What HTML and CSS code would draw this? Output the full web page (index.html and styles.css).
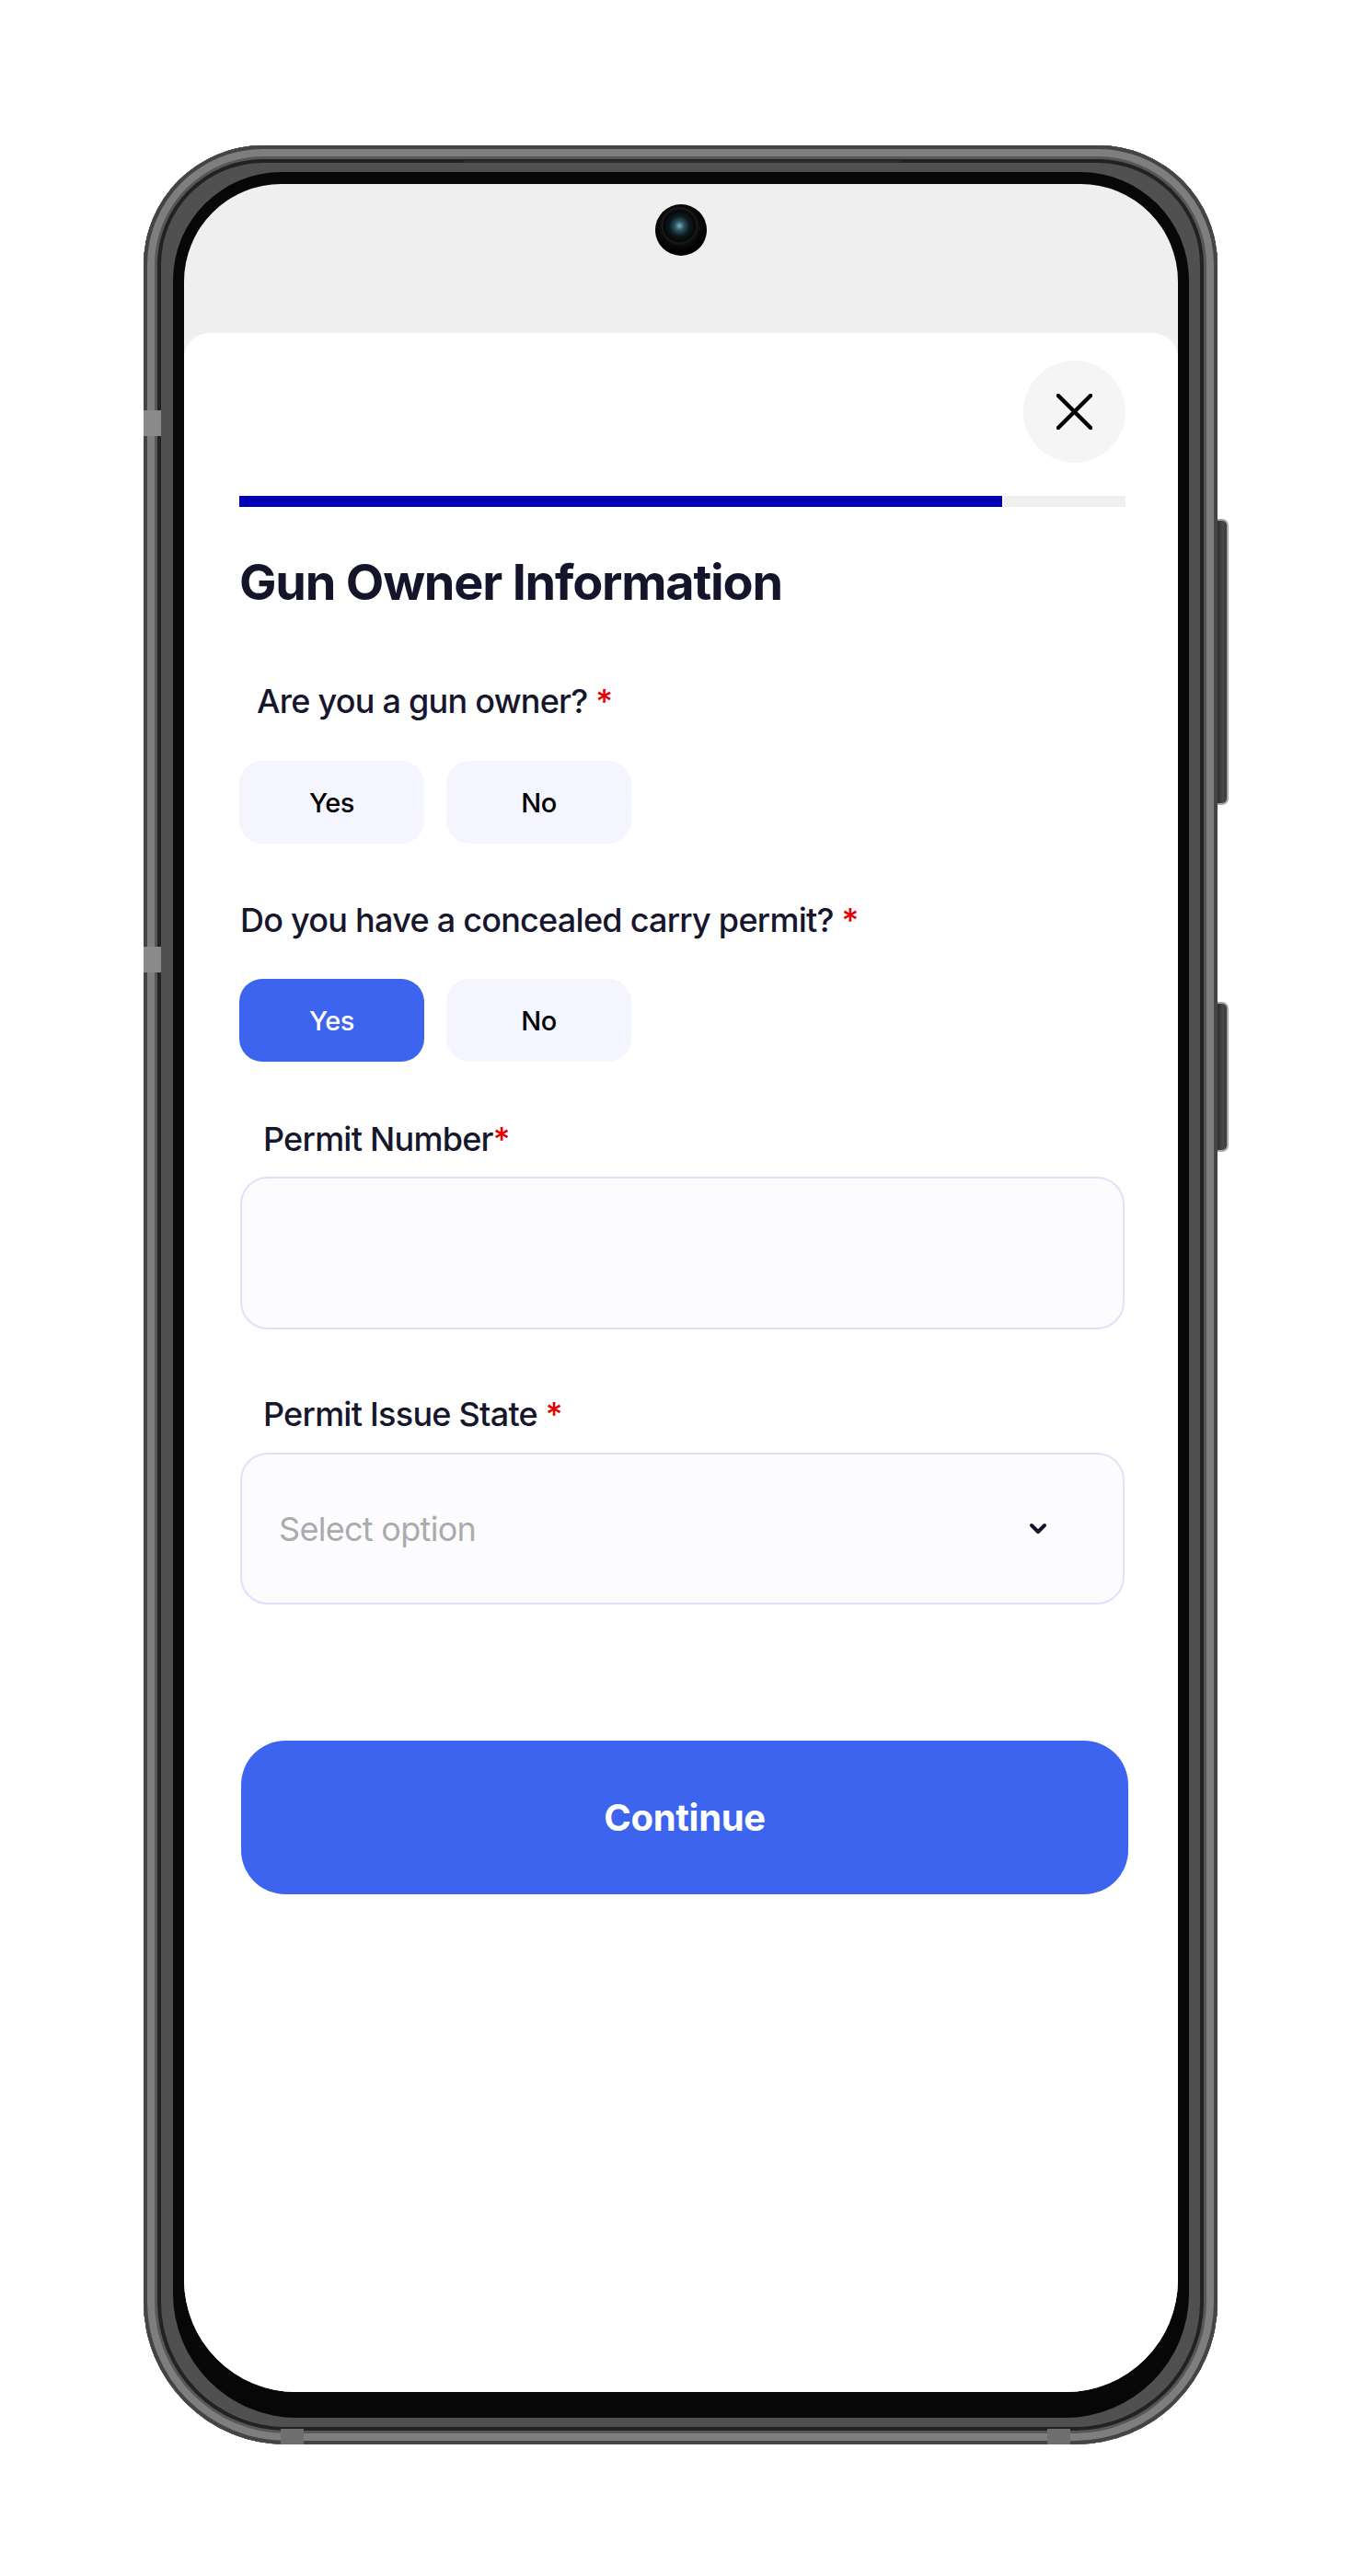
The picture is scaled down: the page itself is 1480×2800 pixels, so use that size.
FILE: index.html
```html
<!DOCTYPE html>
<html lang="en">
<head>
<meta charset="utf-8">
<title>Gun Owner Information</title>
<link rel="stylesheet" href="styles.css">
</head>
<body>
<div class="stage">
  <div class="phone">
    <span class="side-btn side-btn-power"></span>
    <span class="side-btn side-btn-vol"></span>
    <span class="antenna antenna-l1"></span>
    <span class="antenna antenna-l2"></span>
    <span class="antenna-b antenna-b1"></span>
    <span class="antenna-b antenna-b2"></span>
    <span class="speaker"></span>
    <div class="bezel">
      <div class="screen">
        <div class="status"><span class="camera"></span></div>
        <div class="sheet">
          <div class="sheet-top">
            <button class="close" aria-label="Close">
              <svg width="40" height="40" viewBox="0 0 40 40"><path d="M2 2 L38 38 M38 2 L2 38" stroke="#000" stroke-width="4.5" stroke-linecap="round" fill="none"/></svg>
            </button>
          </div>
          <div class="progress"><div class="progress-fill" style="width:86.3%"></div></div>
          <h1 class="title">Gun Owner Information</h1>

          <p class="label label-q1">Are you a gun owner? <span class="req">*</span></p>
          <div class="choice choice-1">
            <button class="opt">Yes</button>
            <button class="opt">No</button>
          </div>

          <p class="label label-q2">Do you have a concealed carry permit? <span class="req">*</span></p>
          <div class="choice choice-2">
            <button class="opt opt-active">Yes</button>
            <button class="opt">No</button>
          </div>

          <p class="label label-field label-permit">Permit Number<span class="req">*</span></p>
          <div class="field"></div>

          <p class="label label-field label-state">Permit Issue State <span class="req">*</span></p>
          <div class="field field-select">
            <span class="placeholder">Select option</span>
            <svg class="chev" width="20" height="14" viewBox="0 0 20 14"><path d="M3 3 L10 10 L17 3" stroke="#15152e" stroke-width="4" stroke-linecap="round" stroke-linejoin="round" fill="none"/></svg>
          </div>

          <button class="continue">Continue</button>
        </div>
      </div>
    </div>
  </div>
</div>
</body>
</html>
```

FILE: styles.css
```css
* { box-sizing: border-box; }
html, body { margin: 0; padding: 0; background: #ffffff; }
body { font-family: Inter, "Noto Sans", "Liberation Sans", sans-serif; }

.stage {
  padding: 158px 0 0 156px;
}

.phone {
  position: relative;
  width: 1167px;
  height: 2499px;
  padding: 29px 31px 29px 32px;
  border-radius: 130px 130px 155px 155px;
  background: #505050;
  box-shadow:
    inset 0 0 0 4px #444444,
    inset 0 0 0 12px #7e7e7e,
    inset 0 0 0 15px #575757,
    inset 0 0 0 19px #222222;
}

.side-btn {
  position: absolute;
  left: 1167px;
  width: 12px;
  background: linear-gradient(to right, #2e2e2e, #4a4a4a 60%, #3a3a3a);
  border: 2px solid #a8a8a8;
  border-left: none;
  border-radius: 0 7px 7px 0;
}
.side-btn-power { top: 406px; height: 311px; }
.side-btn-vol { top: 931px; height: 163px; }

.antenna {
  position: absolute;
  left: 0;
  width: 19px;
  height: 28px;
  background: #8a8a8a;
}
.antenna-l1 { top: 288px; }
.antenna-l2 { top: 871px; }

.antenna-b {
  position: absolute;
  bottom: 0;
  width: 25px;
  height: 17px;
  background: #6e6e6e;
}
.antenna-b1 { left: 149px; }
.antenna-b2 { left: 982px; }

.speaker {
  position: absolute;
  top: 16px;
  left: 347px;
  width: 476px;
  height: 3px;
  border-radius: 2px;
  background: #2b2b2b;
}

.bezel {
  height: 100%;
  background: #070707;
  padding: 13px 12px 28px 12px;
  border-radius: 118px 118px 135px 135px;
}

.screen {
  position: relative;
  width: 1080px;
  height: 2400px;
  border-radius: 106px 106px 122px 122px;
  overflow: hidden;
  background: #efefef;
  display: flex;
  flex-direction: column;
}

.status {
  position: relative;
  flex: none;
  height: 162px;
}

.camera {
  position: absolute;
  left: 512px;
  top: 22px;
  width: 56px;
  height: 56px;
  border-radius: 50%;
  background:
    radial-gradient(circle at 47% 42%, #7fb3c0 0, #2c5560 5px, #0d1a1e 11px, #050708 17px, #1a1a1a 19px, #0b0b0b 21px, #000 28px);
}

.sheet {
  flex: 1;
  background: #ffffff;
  border-radius: 27px 27px 0 0;
  padding: 30px 57px 0 60px;
  display: flex;
  flex-direction: column;
  align-items: stretch;
}

.sheet-top {
  display: flex;
  justify-content: flex-end;
}

.close {
  width: 111px;
  height: 111px;
  border: none;
  border-radius: 50%;
  background: #f5f5f5;
  display: flex;
  align-items: center;
  justify-content: center;
  padding: 0;
}
.close svg { width: 39px; height: 39px; }

.progress {
  margin-top: 36px;
  height: 12px;
  background: #efefef;
}
.progress-fill {
  height: 100%;
  background: #0000b8;
  border-right: 2px solid #ffffff;
}

.title {
  margin: 49px 0 0;
  font-size: 54px;
  line-height: 65px;
  font-weight: 700;
  color: #14142b;
  letter-spacing: -1.2px;
}

.label {
  margin: 0;
  font-size: 36px;
  line-height: 44px;
  font-weight: 500;
  color: #16162c;
  letter-spacing: -0.75px;
}
.req { color: #e60000; }

.label-q1 { margin-top: 75px; padding-left: 19px; }
.label-q2 { margin-top: 61px; padding-left: 1px; }
.label-permit { margin-top: 62px; padding-left: 26px; }
.label-state { margin-top: 70px; padding-left: 26px; }

.choice {
  display: flex;
  gap: 24px;
}
.choice-1 { margin-top: 43px; }
.choice-2 { margin-top: 42px; }

.opt {
  width: 201px;
  height: 90px;
  border: none;
  border-radius: 25px;
  background: #f4f5fe;
  color: #000000;
  font-family: Inter, "Noto Sans", sans-serif;
  font-size: 29px;
  font-weight: 500;
  letter-spacing: -0.4px;
  padding: 0;
}
.opt-active {
  background: #3d64ee;
  color: #ffffff;
}

.field {
  margin: 19px 1px 0;
  height: 166px;
  border: 2px solid #e0e0fa;
  border-radius: 30px;
  background: #fcfcff;
}
.field-select {
  margin-top: 20px;
  height: 165px;
  display: flex;
  align-items: center;
  justify-content: space-between;
  padding: 0 82px 0 40px;
}
.placeholder {
  font-size: 36px;
  color: #ababab;
  letter-spacing: -0.7px;
}
.chev { display: block; }

.continue {
  margin: 148px -3px 0 2px;
  height: 167px;
  border: none;
  border-radius: 48px;
  background: #3d64ee;
  color: #ffffff;
  font-family: Inter, "Noto Sans", sans-serif;
  font-size: 40px;
  font-weight: 700;
  letter-spacing: -0.3px;
}
```
